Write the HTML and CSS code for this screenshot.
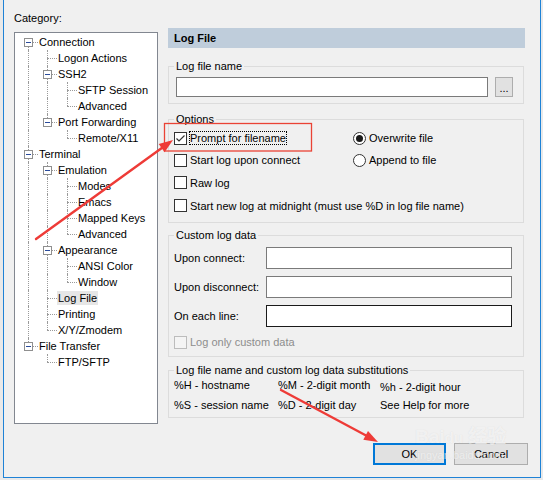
FILE: index.html
```html
<!DOCTYPE html>
<html>
<head>
<meta charset="utf-8">
<title>Log File</title>
<link rel="stylesheet" href="styles.css">
</head>
<body>
<div class="dialog">
  <div class="main">
    <div class="left">
      <div class="cat">Category:</div>
      <div class="tree">
        <div class="row"><span class="c0 node first"><i class="exp"></i></span><span class="label">Connection</span></div>
        <div class="row"><span class="c0 v"></span><span class="c1 node mid"></span><span class="label">Logon Actions</span></div>
        <div class="row"><span class="c0 v"></span><span class="c1 node mid"><i class="exp"></i></span><span class="label">SSH2</span></div>
        <div class="row"><span class="c0 v"></span><span class="c1 v"></span><span class="c2 node mid"></span><span class="label">SFTP Session</span></div>
        <div class="row"><span class="c0 v"></span><span class="c1 v"></span><span class="c2 node last"></span><span class="label">Advanced</span></div>
        <div class="row"><span class="c0 v"></span><span class="c1 node last"><i class="exp"></i></span><span class="label">Port Forwarding</span></div>
        <div class="row"><span class="c0 v"></span><span class="c1"></span><span class="c2 node last"></span><span class="label">Remote/X11</span></div>
        <div class="row"><span class="c0 node mid"><i class="exp"></i></span><span class="label">Terminal</span></div>
        <div class="row"><span class="c0 v"></span><span class="c1 node mid"><i class="exp"></i></span><span class="label">Emulation</span></div>
        <div class="row"><span class="c0 v"></span><span class="c1 v"></span><span class="c2 node mid"></span><span class="label">Modes</span></div>
        <div class="row"><span class="c0 v"></span><span class="c1 v"></span><span class="c2 node mid"></span><span class="label">Emacs</span></div>
        <div class="row"><span class="c0 v"></span><span class="c1 v"></span><span class="c2 node mid"></span><span class="label">Mapped Keys</span></div>
        <div class="row"><span class="c0 v"></span><span class="c1 v"></span><span class="c2 node last"></span><span class="label">Advanced</span></div>
        <div class="row"><span class="c0 v"></span><span class="c1 node mid"><i class="exp"></i></span><span class="label">Appearance</span></div>
        <div class="row"><span class="c0 v"></span><span class="c1 v"></span><span class="c2 node mid"></span><span class="label">ANSI Color</span></div>
        <div class="row"><span class="c0 v"></span><span class="c1 v"></span><span class="c2 node last"></span><span class="label">Window</span></div>
        <div class="row"><span class="c0 v"></span><span class="c1 node mid"></span><span class="label sel">Log File</span></div>
        <div class="row"><span class="c0 v"></span><span class="c1 node mid"></span><span class="label">Printing</span></div>
        <div class="row"><span class="c0 v"></span><span class="c1 node last"></span><span class="label">X/Y/Zmodem</span></div>
        <div class="row"><span class="c0 node last"><i class="exp"></i></span><span class="label">File Transfer</span></div>
        <div class="row"><span class="c0"></span><span class="c1 node last"></span><span class="label">FTP/SFTP</span></div>
      </div>
    </div>

    <div class="right">
      <div class="title">Log File</div>

      <fieldset class="group g-name">
        <legend>Log file name</legend>
        <div class="file-row">
          <div class="input"></div>
          <div class="dots">...</div>
        </div>
      </fieldset>

      <fieldset class="group g-opts">
        <legend>Options</legend>
        <div class="opts">
          <div class="check"><span class="box"><svg width="11" height="11" viewBox="0 0 11 11"><polyline points="1.5,5.5 4,8 9.5,2.5" fill="none" stroke="#333" stroke-width="1.2"/></svg></span><span class="txt focus">Prompt for filename</span></div>
          <div class="check"><span class="radio on"></span><span class="txt">Overwrite file</span></div>
          <div class="check"><span class="box"></span><span class="txt">Start log upon connect</span></div>
          <div class="check"><span class="radio"></span><span class="txt">Append to file</span></div>
          <div class="check wide"><span class="box"></span><span class="txt">Raw log</span></div>
          <div class="check wide"><span class="box"></span><span class="txt">Start new log at midnight (must use %D in log file name)</span></div>
        </div>
      </fieldset>

      <fieldset class="group g-custom">
        <legend>Custom log data</legend>
        <div class="custom">
          <span>Upon connect:</span><div class="input"></div>
          <span>Upon disconnect:</span><div class="input"></div>
          <span>On each line:</span><div class="input focused"></div>
          <div class="check wide disabled"><span class="box"></span><span class="txt">Log only custom data</span></div>
        </div>
      </fieldset>

      <fieldset class="group g-subs">
        <legend>Log file name and custom log data substitutions</legend>
        <div class="subs">
          <span>%H - hostname</span>
          <span>%M - 2-digit month</span>
          <span class="low">%h - 2-digit hour</span>
          <span>%S - session name</span>
          <span>%D - 2-digit day</span>
          <span>See Help for more</span>
        </div>
      </fieldset>
    </div>
  </div>

  <div class="buttons">
    <div class="btn ok">OK</div>
    <div class="btn">Cancel</div>
  </div>
</div>

<div class="watermark">
  <span class="wm-logo">Bai<b>du</b> 经验</span>
  <span class="wm-url">jingyan.baidu.com</span>
</div>

<svg class="annot" width="543" height="480" viewBox="0 0 543 480">
  <rect x="164.5" y="123.5" width="147" height="27.5" fill="none" stroke="#ea4335" stroke-width="1.3"/>
  <line x1="36" y1="239" x2="162.5" y2="147.5" stroke="#ee3b37" stroke-width="2.4" stroke-linecap="round"/>
  <polygon points="173,140 164.6,152.3 158.7,144.1" fill="#ee3b37"/>
  <line x1="281" y1="390" x2="366.5" y2="435.8" stroke="#ee3b37" stroke-width="2.4" stroke-linecap="round"/>
  <polygon points="378,442 363.3,439.8 368,431" fill="#ee3b37"/>
</svg>
</body>
</html>
```

FILE: styles.css
```css
html, body {
  margin: 0;
  padding: 0;
}

body {
  width: 543px;
  height: 480px;
  background: #e9e9e9;
  font-family: "Liberation Sans", Arial, "Noto Sans CJK SC", sans-serif;
  font-size: 11px;
  color: #000;
  position: relative;
  overflow: hidden;
}

.dialog {
  margin-left: 3px;
  width: 538px;
  box-sizing: border-box;
  background: #f0f0f0;
  border-left: 1px solid #1f82d6;
  border-right: 1px solid #1f82d6;
  border-bottom: 1px solid #1f82d6;
  padding: 12px 0 12px 10px;
}

.main {
  display: grid;
  grid-template-columns: 144px 356px;
  column-gap: 10px;
  align-items: start;
}

/* ---------- left: category tree ---------- */
.cat {
  line-height: 13px;
  margin-bottom: 7px;
}

.tree {
  height: 392px;
  box-sizing: border-box;
  border: 1px solid #828790;
  background: #fff;
  padding: 1px 0 0 3px;
}

.row {
  display: flex;
  height: 16px;
}

.c0, .c1, .c2 {
  flex: none;
  position: relative;
}
.c0 { width: 20px; --x: 10px; }
.c1 { width: 19px; --x: 9px; }
.c2 { width: 20px; --x: 10px; }

.v::before,
.node::before {
  content: "";
  position: absolute;
  left: var(--x);
  top: 0;
  bottom: 0;
  border-left: 1px dotted #9a9a9a;
}
.node.first::before { top: 8px; }
.node.last::before { bottom: 8px; }

.node::after {
  content: "";
  position: absolute;
  left: var(--x);
  right: 0;
  top: 8px;
  border-top: 1px dotted #9a9a9a;
}

.exp {
  position: absolute;
  left: calc(var(--x) - 4px);
  top: 4px;
  width: 9px;
  height: 9px;
  box-sizing: border-box;
  border: 1px solid #8f8f8f;
  background: #fff;
  z-index: 1;
}
.exp::after {
  content: "";
  position: absolute;
  left: 1px;
  top: 3px;
  width: 5px;
  height: 1px;
  background: #2a4b9b;
}

.label {
  line-height: 14px;
  margin: 1px 0;
  padding: 0 1px;
  white-space: nowrap;
}
.label.sel { background: #e6e6e6; }

/* ---------- right: page ---------- */
.right {
  margin-top: 16px;
}

.title {
  height: 20px;
  line-height: 20px;
  margin-right: -1px;
  padding-left: 6px;
  background: #bfcddb;
  font-weight: bold;
}

.group {
  margin: 0;
  min-width: 0;
  border: 1px solid #dcdcdc;
  padding: 0 10px 6px 5px;
}
.group legend {
  padding: 0 2px;
  margin-left: 0;
  line-height: 13px;
}

.g-name { margin-top: 12px; padding-top: 4px; }
.g-opts { margin-top: 9px; padding-top: 1px; padding-bottom: 5px; }
.g-custom { margin-top: 6px; padding-top: 5px; padding-bottom: 6px; }
.g-subs { margin-top: 7px; padding-top: 2px; padding-bottom: 5px; }

.input {
  height: 20px;
  box-sizing: border-box;
  background: #fff;
  border: 1px solid #7a7a7a;
}
.input.focused { border-color: #1a1a1a; }

.file-row {
  display: flex;
  gap: 7px;
  padding-left: 2px;
}
.file-row .input { flex: 1; }

.dots {
  width: 18px;
  height: 20px;
  box-sizing: border-box;
  background: #e1e1e1;
  border: 1px solid #adadad;
  text-align: center;
  line-height: 20px;
}

/* options */
.opts {
  display: grid;
  grid-template-columns: 179px auto;
  grid-template-rows: 22px 22px 23px 23px;
  align-items: center;
}
.wide { grid-column: 1 / span 2; }

.check {
  display: flex;
  align-items: center;
  white-space: nowrap;
}

.box {
  flex: none;
  width: 13px;
  height: 13px;
  box-sizing: border-box;
  border: 1px solid #333;
  background: #fff;
  display: flex;
  align-items: center;
  justify-content: center;
}
.box svg { display: block; }

.radio {
  flex: none;
  width: 13px;
  height: 13px;
  box-sizing: border-box;
  border: 1px solid #333;
  border-radius: 50%;
  background: #fff;
  display: flex;
  align-items: center;
  justify-content: center;
}
.radio.on::after {
  content: "";
  width: 7px;
  height: 7px;
  border-radius: 50%;
  background: #1a1a1a;
}

.txt {
  margin-left: 2px;
  border: 1px dotted transparent;
  line-height: 12px;
}
.txt.focus { border-color: #000; }

.disabled { color: #8d8d8d; }
.disabled .box { border-color: #bcbcbc; background: #f4f4f4; }

/* custom log data */
.custom {
  display: grid;
  grid-template-columns: 92px 1fr;
  row-gap: 7px;
  align-items: center;
}
.custom .input {
  height: 22px;
  margin-right: 1px;
}
.custom .check { height: 16px; }

/* substitutions */
.subs {
  display: grid;
  grid-template-columns: 104px 102px auto;
  grid-auto-rows: 13px;
  row-gap: 7px;
  line-height: 13px;
  white-space: nowrap;
}
.subs .low { margin-top: 2px; }

/* buttons */
.buttons {
  display: flex;
  justify-content: flex-end;
  gap: 8px;
  margin-top: 19px;
  margin-right: 12px;
}
.btn {
  width: 74px;
  height: 22px;
  box-sizing: border-box;
  background: #e1e1e1;
  border: 1px solid #adadad;
  text-align: center;
  line-height: 20px;
}
.btn.ok {
  width: 73px;
  border: 2px solid #0078d7;
  line-height: 18px;
}

/* watermark + annotations (overlays) */
.watermark {
  position: absolute;
  left: 415px;
  top: 426px;
  display: flex;
  flex-direction: column;
  color: rgba(255, 255, 255, 0.6);
  text-shadow: 0 0 1px rgba(160, 160, 160, 0.25);
  pointer-events: none;
}
.wm-logo {
  font-size: 19px;
  line-height: 22px;
  font-weight: bold;
  font-family: "Liberation Sans", "Noto Sans CJK SC", sans-serif;
}
.wm-logo b { font-size: 15px; }
.wm-url {
  font-size: 11px;
  line-height: 12px;
}

.annot {
  position: absolute;
  left: 0;
  top: 0;
  pointer-events: none;
}
```
